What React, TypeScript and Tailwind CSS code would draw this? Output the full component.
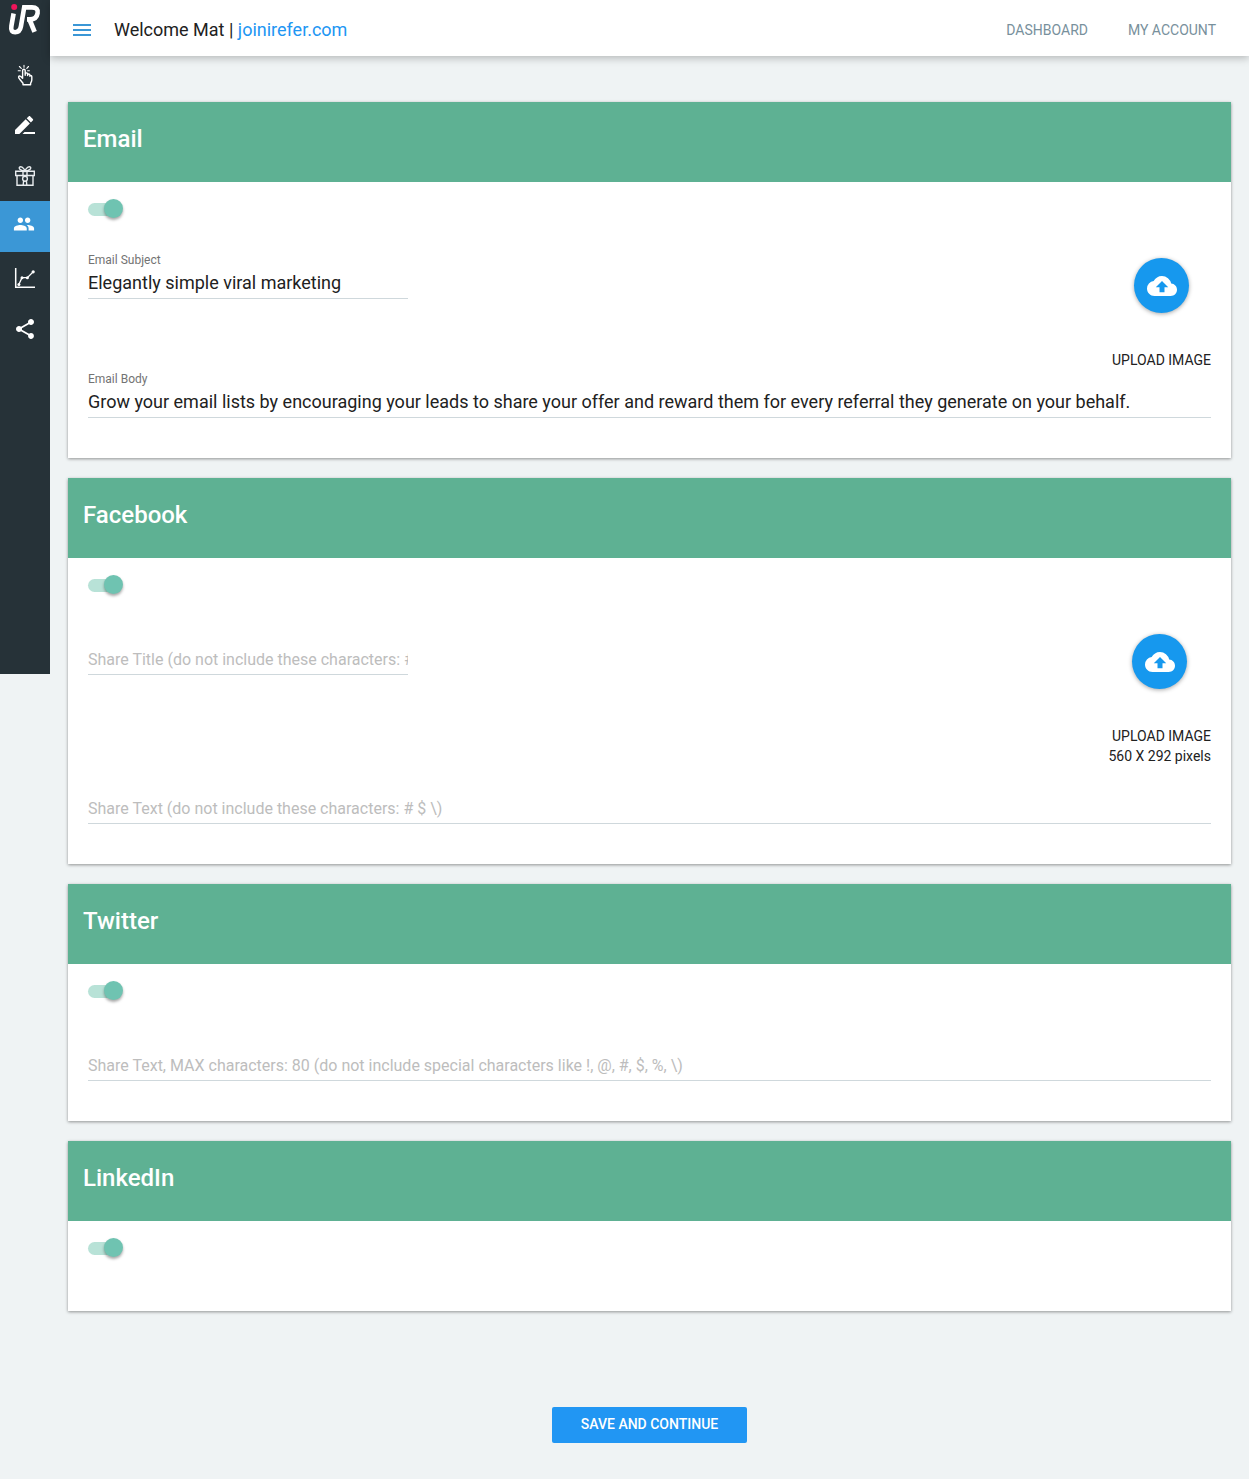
import React, { useId, useState } from "react";
import { MdCloudUpload, MdMenu, MdPeople, MdShare } from "react-icons/md";

function Logo() {
  return (
    <svg width="34" height="34" viewBox="0 0 34 34" fill="none" role="img" aria-label="iRefer">
      <circle cx="6.200" cy="4" r="3" fill="#f0145a" />
      <path
        d="M5.600 10.500 3.400 23C2.600 27.600 4.200 29.200 7.200 29.200c3.400 0 5-2 5.700-5.700L16.200 4.400H24c4.400 0 6.200 2 5.600 5.800-.6 4-3 6.200-7.600 6.200h-3"
        stroke="#fff"
        strokeWidth="4.600"
      />
      <path d="M21.300 16 26.600 28.800" stroke="#fff" strokeWidth="4.800" />
    </svg>
  );
}

function TapIcon() {
  return (
    <svg width="24" height="24" viewBox="0 0 24 24" fill="none" stroke="#fff" strokeWidth="1.400" strokeLinecap="round" strokeLinejoin="round">
      <path d="M9.600 16.200V8.600a1.300 1.300 0 0 1 2.600 0v4.600m0-1.200a1.200 1.200 0 0 1 2.400.2v1.400m0-.8a1.200 1.200 0 0 1 2.300.2v1.200m0-.6c1-.4 1.900.2 1.900 1.200v3c0 1.600-.6 2.400-1.200 3.400v1.600H10v-1.600L6.700 17.200c-1-1.400-1.600-2.400-.8-3 .9-.6 2.200.1 3.700 2" />
      <path d="M11 5.200V3.400M8.300 6.300 6.400 4.500M13.800 6.300l1.700-1.800M7.400 8.800H5.200M14.600 8.800h1.800" strokeWidth="1.100" />
    </svg>
  );
}

function PencilIcon() {
  return (
    <svg width="24" height="24" viewBox="0 0 24 24" fill="#fff">
      <path d="M2 17 12.700 6.300l4.200 4.200L6.400 21H2z" />
      <path d="M13.700 5.300 15.600 3.400c.5-.5 1.200-.5 1.700 0l2.500 2.500c.5.5.5 1.200 0 1.700l-1.900 1.900z" />
      <path d="M11.500 19H22v2H9.500z" />
    </svg>
  );
}

function GiftIcon() {
  return (
    <svg width="24" height="24" viewBox="0 0 24 24" fill="none" stroke="#e8ecee" strokeWidth="1.400">
      <path d="M2.700 7.300h18.600v4.200H2.700zM4 11.500h16v9.800H4zM10 7.300v5.500M14 7.300v5.500" />
      <path d="M12 7C10.500 3 7.500 2 6.500 3.300S8 7 12 7c4 0 6.500-2.400 5.500-3.700S13.500 3 12 7z" />
      <circle cx="12" cy="14.800" r="2.400" />
      <path d="m10.600 17-.4 4M13.400 17l.4 4" />
    </svg>
  );
}

function ChartIcon() {
  return (
    <svg width="24" height="24" viewBox="0 0 24 24" fill="none" stroke="#fff">
      <path d="M2.700 2v19.300H22" strokeWidth="1.500" />
      <path d="M5.800 18.600 9 11.700h5.400L20 6" strokeWidth="1.300" />
      <g fill="#fff" stroke="none">
        <circle cx="5.900" cy="18.600" r="1.500" />
        <circle cx="9" cy="11.700" r="1.500" />
        <circle cx="14.400" cy="11.700" r="1.500" />
        <circle cx="20.200" cy="5.800" r="1.600" />
      </g>
    </svg>
  );
}

const navItems = [
  { label: "Triggers", icon: <TapIcon /> },
  { label: "Design", icon: <PencilIcon /> },
  { label: "Rewards", icon: <GiftIcon /> },
  { label: "Sharing", icon: <MdPeople size={22} />, active: true },
  { label: "Analytics", icon: <ChartIcon /> },
  { label: "Integrations", icon: <MdShare size={24} /> },
];

function Sidebar() {
  return (
    <aside className="h-[674px] w-[50px] shrink-0 bg-[#263238] text-white">
      <a href="#home" className="flex h-12 justify-center pt-[3px]">
        <Logo />
      </a>
      <nav>
        {navItems.map((item) => (
          <a
            key={item.label}
            href={"#" + item.label.toLowerCase()}
            aria-label={item.label}
            className={
              item.active
                ? "flex h-[51px] items-center justify-center bg-[#3b97d6] pr-0.5 pb-1.5"
                : "flex h-[51px] items-center justify-center"
            }
          >
            {item.icon}
          </a>
        ))}
      </nav>
    </aside>
  );
}

function Switch({ label }: { label: string }) {
  const [on, setOn] = useState(true);
  return (
    <div className="h-[69px] pt-[17px]">
      <label className="relative flex h-[19px] w-[35px] cursor-pointer items-center">
        <input
          type="checkbox"
          role="switch"
          aria-label={"Enable " + label}
          checked={on}
          onChange={(e) => setOn(e.target.checked)}
          className="peer sr-only"
        />
        <span className="mt-0.5 h-[13px] w-[33px] rounded-full bg-gray-300 peer-checked:bg-[#b8e2d7]" />
        <span className="absolute top-0 left-0 size-[19px] rounded-full bg-gray-50 shadow-[0_2px_3px_rgba(0,0,0,0.35)] peer-checked:left-4 peer-checked:bg-[#6fc3b1]" />
      </label>
    </div>
  );
}

type FieldProps = { name: string; label?: string; value?: string; placeholder?: string; narrow?: boolean };

function Field({ name, label, value, placeholder, narrow }: FieldProps) {
  const id = useId();
  return (
    <div className={narrow ? "w-80 pt-4" : "w-full pt-4"}>
      {label && (
        <label htmlFor={id} className="-mt-4 block h-4 text-[12px] leading-[18px] text-[#737373]">
          {label}
        </label>
      )}
      <input
        id={id}
        type="text"
        aria-label={label ? undefined : name}
        defaultValue={value}
        placeholder={placeholder}
        className="block h-8 w-full border-b border-[#cfd8dc] bg-transparent text-[18px] text-[#212121] outline-none placeholder:text-[16px] placeholder:text-[#bdbdbd]"
      />
    </div>
  );
}

function Upload({ note }: { note?: string }) {
  return (
    <div className="mt-[7px] flex flex-col items-center">
      <button
        type="button"
        aria-label="Upload image"
        className="flex size-[55px] items-center justify-center rounded-full bg-[#1698ee] text-white shadow-[0_1px_4px_rgba(0,0,0,0.35)]"
      >
        <MdCloudUpload size={30} />
      </button>
      <p className="mt-[37px] text-right text-[14px] leading-5 text-[#212121]">
        UPLOAD IMAGE
        {note && <span className="block">{note}</span>}
      </p>
    </div>
  );
}

function Card({ title, children }: { title: string; children?: React.ReactNode }) {
  return (
    <section className="bg-white shadow-[0_1px_3px_rgba(0,0,0,0.4)]">
      <h2 className="h-20 bg-[#5eb193] px-[15px] pt-[21px] text-[24px] leading-8 font-medium text-white">{title}</h2>
      <div className="px-5">
        <Switch label={title} />
        {children}
      </div>
    </section>
  );
}

export default function App() {
  return (
    <div className="flex min-h-screen items-start bg-[#eff3f4] font-['Roboto',sans-serif] text-[#263238]">
      <Sidebar />
      <div className="min-w-0 flex-1">
        <header className="flex h-14 items-center bg-white pt-1 pr-[33px] pl-5 shadow-[0_2px_8px_rgba(0,0,0,0.25)]">
          <button type="button" aria-label="Toggle menu" className="text-[#3b97d6]">
            <MdMenu size={24} />
          </button>
          <h1 className="ml-5 flex-1 pb-0.5 text-[18px] text-[#212121]">
            Welcome Mat |{" "}
            <a href="#site" className="text-[#2196f3]">
              joinirefer.com
            </a>
          </h1>
          <nav className="flex gap-10 text-[14px] text-[#78909c]">
            <a href="#dashboard">DASHBOARD</a>
            <a href="#account">MY ACCOUNT</a>
          </nav>
        </header>

        <main className="px-[18px] pt-[46px] pb-9">
          <form onSubmit={(e) => e.preventDefault()}>
            <div className="flex flex-col gap-5">
              <Card title="Email">
                <div className="flex items-start justify-between">
                  <Field name="Email Subject" label="Email Subject" value="Elegantly simple viral marketing" narrow />
                  <Upload />
                </div>
                <div className="pb-10">
                  <Field
                    name="Email Body"
                    label="Email Body"
                    value="Grow your email lists by encouraging your leads to share your offer and reward them for every referral they generate on your behalf."
                  />
                </div>
              </Card>

              <Card title="Facebook">
                <div className="flex items-start justify-between">
                  <Field name="Share title" placeholder="Share Title (do not include these characters: # $ \)" narrow />
                  <Upload note="560 X 292 pixels" />
                </div>
                <div className="pt-2.5 pb-10">
                  <Field name="Share text" placeholder="Share Text (do not include these characters: # $ \)" />
                </div>
              </Card>

              <Card title="Twitter">
                <div className="pb-10">
                  <Field
                    name="Share text"
                    placeholder="Share Text, MAX characters: 80 (do not include special characters like !, @, #, $, %, \)"
                  />
                </div>
              </Card>

              <Card title="LinkedIn">
                <div className="h-[21px]" />
              </Card>
            </div>

            <div className="mt-24 flex justify-center">
              <button
                type="submit"
                className="h-9 rounded-xs bg-[#2196f3] px-[29px] pb-0.5 text-[14px] font-medium text-white"
              >
                SAVE AND CONTINUE
              </button>
            </div>
          </form>
        </main>
      </div>
    </div>
  );
}
